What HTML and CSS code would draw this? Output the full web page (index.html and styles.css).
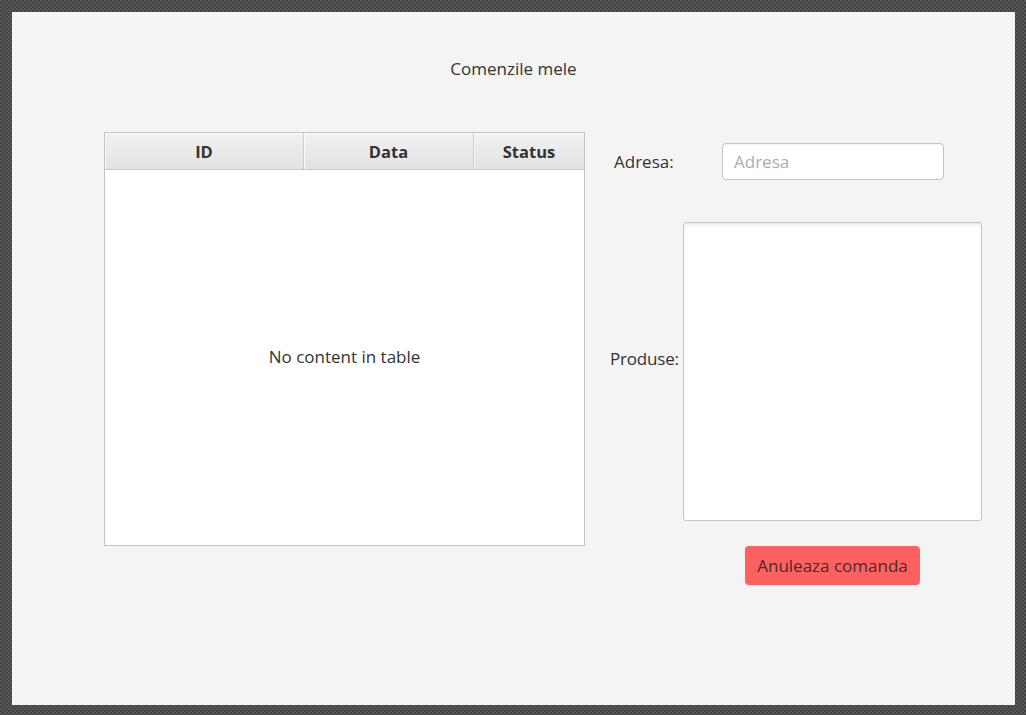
FILE: index.html
```html
<!DOCTYPE html>
<html lang="ro">
<head>
<meta charset="utf-8">
<title>Comenzile mele</title>
<link rel="stylesheet" href="styles.css">
</head>
<body>
<div class="window">
  <div class="title">Comenzile mele</div>
  <div class="content">
    <div class="table">
      <div class="thead">
        <div class="th col-id">ID</div>
        <div class="th col-data">Data</div>
        <div class="th col-status">Status</div>
      </div>
      <div class="tbody">No content in table</div>
    </div>
    <div class="side">
      <div class="row row-adresa">
        <label class="lbl lbl-adresa" for="adresa">Adresa:</label>
        <input id="adresa" class="input" type="text" placeholder="Adresa">
      </div>
      <div class="row row-produse">
        <label class="lbl lbl-produse" for="produse">Produse:</label>
        <textarea id="produse" class="textarea"></textarea>
      </div>
      <div class="row row-btn">
        <button class="btn" type="button">Anuleaza comanda</button>
      </div>
    </div>
  </div>
</div>
</body>
</html>
```
FILE: styles.css
```css
html, body {
  margin: 0;
  padding: 0;
  height: 100%;
}
body {
  background-color: #4b4b4b;
  background-image: repeating-conic-gradient(#424242 0 25%, #585858 0 50%);
  background-size: 4px 4px;
  font-family: "Open Sans", "Noto Sans", sans-serif;
  color: #333333;
  overflow: hidden;
}
.window {
  box-sizing: border-box;
  margin: 12px 11px 0 12px;
  width: 1003px;
  height: 693px;
  background: #f4f4f4;
  padding: 45px 0 0 92px;
}
.title {
  height: 24px;
  line-height: 24px;
  font-size: 17px;
  text-align: center;
  margin-left: -92px;
  color: #333;
}
.content {
  display: flex;
  margin-top: 51px;
}
.table {
  box-sizing: border-box;
  width: 481px;
  height: 414px;
  border: 1px solid #c2c2c2;
  background: #ffffff;
  display: flex;
  flex-direction: column;
}
.thead {
  display: flex;
  height: 37px;
  box-sizing: border-box;
  border-bottom: 1px solid #c8c8c8;
  background: linear-gradient(#f2f2f2, #e2e2e2);
}
.th {
  box-sizing: border-box;
  display: flex;
  align-items: center;
  justify-content: center;
  font-weight: 700;
  font-size: 16.5px;
  color: #333;
  border-right: 1px solid #cccccc;
  box-shadow: inset 1px 1px 0 #fafafa;
}
.col-id { width: 199px; }
.col-data { width: 170px; }
.col-status { flex: 1; border-right: none; }
.tbody {
  flex: 1;
  display: flex;
  align-items: center;
  justify-content: center;
  font-size: 17px;
  color: #333;
  padding-bottom: 2px;
}
.side {
  margin-left: 25px;
  display: flex;
  flex-direction: column;
}
.row {
  display: flex;
  align-items: center;
}
.row-adresa {
  margin-top: 11px;
  padding-left: 4px;
}
.lbl {
  font-size: 17px;
  color: #333;
}
.lbl-adresa { width: 108px; }
.input {
  box-sizing: border-box;
  width: 222px;
  height: 37px;
  border: 1px solid #c4c4c4;
  border-radius: 4px;
  background: #fff;
  padding: 0 11px;
  font-family: inherit;
  font-size: 17px;
  color: #333;
  outline: none;
  box-shadow: inset 0 1px 2px rgba(0,0,0,0.05);
}
.input::placeholder { color: #acacac; }
.row-produse {
  margin-top: 42px;
}
.lbl-produse {
  width: 73px;
  padding-bottom: 27px;
  letter-spacing: -0.2px;
}
.textarea {
  box-sizing: border-box;
  width: 299px;
  height: 299px;
  border: 1px solid #c4c4c4;
  border-radius: 3px;
  background: #fff;
  resize: none;
  outline: none;
  margin: 0;
  box-shadow: inset 0 3px 4px -2px rgba(0,0,0,0.12);
}
.row-btn {
  margin-top: 25px;
  padding-left: 135px;
}
.btn {
  box-sizing: border-box;
  width: 175px;
  height: 39px;
  border: none;
  border-radius: 4px;
  background: #ff6161;
  color: #4a2a2a;
  font-family: inherit;
  font-size: 17px;
  padding: 0;
  cursor: pointer;
}
```
